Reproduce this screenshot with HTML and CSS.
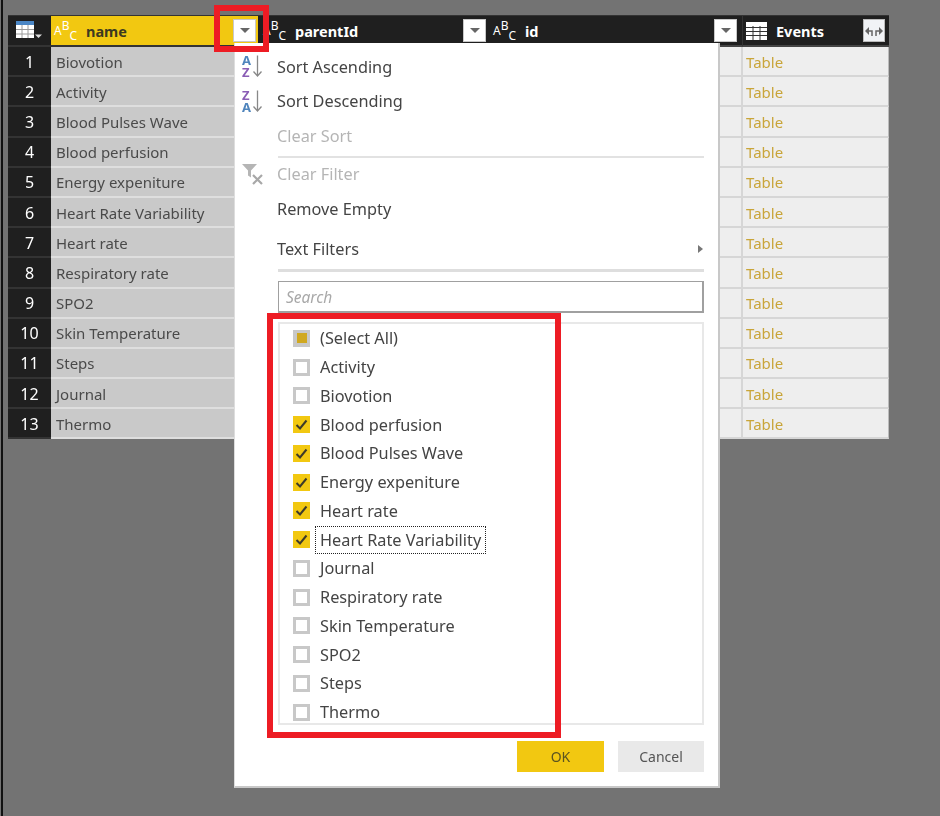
FILE: index.html
```html
<!DOCTYPE html>
<html lang="en">
<head>
<meta charset="utf-8">
<title>Power BI filter</title>
<link rel="stylesheet" href="styles.css">
</head>
<body>
<svg class="defs" width="0" height="0" aria-hidden="true">
  <symbol id="check" viewBox="0 0 17 17">
    <path d="M3.5 9l3.5 3.5 6.5-8" fill="none" stroke="#3d3a2a" stroke-width="2"/>
  </symbol>
</svg>
<div class="stage">
  <div class="table">
    <div class="hcell corner">
      <svg width="26" height="20" viewBox="0 0 26 20"><rect x="0" y="0" width="18" height="17" fill="#fff"/><rect x="0" y="0" width="18" height="4" fill="#4a86c5"/><path d="M6 4v13M12 4v13M0 8.500h18M0 13h18" stroke="#9a9a9a" stroke-width="1"/><path d="M19 13.500h7l-3.500 3.500z" fill="#ddd"/></svg>
    </div>
    <div class="hcell hname">
      <span class="abc"><span>A</span><span class="up">B</span><span class="down">C</span></span>
      <span class="hlabel dark">name</span>
      <span class="fbtn"><i class="tri"></i></span>
    </div>
    <div class="hcell hparent">
      <span class="abc"><span>A</span><span class="up">B</span><span class="down">C</span></span>
      <span class="hlabel">parentId</span>
      <span class="fbtn"><i class="tri"></i></span>
    </div>
    <div class="hcell hid">
      <span class="abc"><span>A</span><span class="up">B</span><span class="down">C</span></span>
      <span class="hlabel">id</span>
      <span class="fbtn"><i class="tri"></i></span>
    </div>
    <div class="hcell hevents">
      <svg class="tblicon" width="21" height="18" viewBox="0 0 21 18"><rect x="0.500" y="0.500" width="20" height="17" fill="#fff" stroke="#fff"/><path d="M0 5.500h21M0 9.500h21M0 13.500h21M7 4v14M14 4v14" stroke="#333" stroke-width="1"/></svg>
      <span class="hlabel">Events</span>
      <span class="xbtn"><svg width="20" height="16" viewBox="0 0 20 16"><path d="M1 8l4-4v8zM19 8l-4-4v8z" fill="#666"/><path d="M5 8h3v5M15 8h-3v5" fill="none" stroke="#666" stroke-width="1.500"/></svg></span>
    </div>

    <div class="num">1</div><div class="c name">Biovotion</div><div class="c"></div><div class="c"></div><div class="c tbl">Table</div>
    <div class="num">2</div><div class="c name">Activity</div><div class="c"></div><div class="c"></div><div class="c tbl">Table</div>
    <div class="num">3</div><div class="c name">Blood Pulses Wave</div><div class="c"></div><div class="c"></div><div class="c tbl">Table</div>
    <div class="num">4</div><div class="c name">Blood perfusion</div><div class="c"></div><div class="c"></div><div class="c tbl">Table</div>
    <div class="num">5</div><div class="c name">Energy expeniture</div><div class="c"></div><div class="c"></div><div class="c tbl">Table</div>
    <div class="num">6</div><div class="c name">Heart Rate Variability</div><div class="c"></div><div class="c"></div><div class="c tbl">Table</div>
    <div class="num">7</div><div class="c name">Heart rate</div><div class="c"></div><div class="c"></div><div class="c tbl">Table</div>
    <div class="num">8</div><div class="c name">Respiratory rate</div><div class="c"></div><div class="c"></div><div class="c tbl">Table</div>
    <div class="num">9</div><div class="c name">SPO2</div><div class="c"></div><div class="c"></div><div class="c tbl">Table</div>
    <div class="num">10</div><div class="c name">Skin Temperature</div><div class="c"></div><div class="c"></div><div class="c tbl">Table</div>
    <div class="num">11</div><div class="c name">Steps</div><div class="c"></div><div class="c"></div><div class="c tbl">Table</div>
    <div class="num">12</div><div class="c name">Journal</div><div class="c"></div><div class="c"></div><div class="c tbl">Table</div>
    <div class="num">13</div><div class="c name">Thermo</div><div class="c"></div><div class="c"></div><div class="c tbl">Table</div>
  </div>

  <div class="popup">
    <div class="item i1">
      <span class="mi"><svg width="24" height="31" viewBox="0 -3.500 24 31"><text x="1" y="10.500" class="sa">A</text><text x="1" y="22" class="sz">Z</text><path d="M16.500 1v20M12.500 17l4 4.500 4-4.500" fill="none" stroke="#888" stroke-width="1.300"/></svg></span>
      <span>Sort Ascending</span>
    </div>
    <div class="item i1">
      <span class="mi"><svg width="24" height="31" viewBox="0 -3.500 24 31"><text x="1" y="10.500" class="sz">Z</text><text x="1" y="22" class="sa">A</text><path d="M16.500 1v20M12.500 17l4 4.500 4-4.500" fill="none" stroke="#888" stroke-width="1.300"/></svg></span>
      <span>Sort Descending</span>
    </div>
    <div class="item i1 off"><span class="mi"></span><span>Clear Sort</span></div>
    <div class="sep"></div>
    <div class="item i2 off">
      <span class="mi"><svg width="24" height="22" viewBox="0 0 24 22"><path d="M1 1h15l-6 6.500v7l-3-2v-5z" fill="#b5b5b5"/><path d="M12 12l9 9M21 12l-9 9" stroke="#a8a8a8" stroke-width="2.200"/></svg></span>
      <span>Clear Filter</span>
    </div>
    <div class="item i3"><span class="mi"></span><span>Remove Empty</span></div>
    <div class="item i4"><span class="mi"></span><span class="grow">Text Filters</span><i class="sub"></i></div>
    <div class="sep thick"></div>
    <div class="search">Search</div>
    <div class="list">
      <div class="row"><span class="cb mixed"><i></i></span><span>(Select All)</span></div>
      <div class="row"><span class="cb"></span><span>Activity</span></div>
      <div class="row"><span class="cb"></span><span>Biovotion</span></div>
      <div class="row"><span class="cb on"><svg width="17" height="17"><use href="#check"/></svg></span><span>Blood perfusion</span></div>
      <div class="row"><span class="cb on"><svg width="17" height="17"><use href="#check"/></svg></span><span>Blood Pulses Wave</span></div>
      <div class="row"><span class="cb on"><svg width="17" height="17"><use href="#check"/></svg></span><span>Energy expeniture</span></div>
      <div class="row"><span class="cb on"><svg width="17" height="17"><use href="#check"/></svg></span><span>Heart rate</span></div>
      <div class="row"><span class="cb on"><svg width="17" height="17"><use href="#check"/></svg></span><span class="focus">Heart Rate Variability</span></div>
      <div class="row"><span class="cb"></span><span>Journal</span></div>
      <div class="row"><span class="cb"></span><span>Respiratory rate</span></div>
      <div class="row"><span class="cb"></span><span>Skin Temperature</span></div>
      <div class="row"><span class="cb"></span><span>SPO2</span></div>
      <div class="row"><span class="cb"></span><span>Steps</span></div>
      <div class="row"><span class="cb"></span><span>Thermo</span></div>
    </div>
    <div class="actions">
      <span class="btn ok">OK</span>
      <span class="btn cancel">Cancel</span>
    </div>
  </div>

  <div class="mark mark-btn"></div>
  <div class="mark mark-list"></div>
</div>
</body>
</html>
```

FILE: styles.css
```css
* { box-sizing: border-box; }
html, body { margin: 0; height: 100%; }
body {
  background: #737373;
  font-family: "Noto Sans", "Open Sans", sans-serif;
  overflow: hidden;
}
.defs { position: absolute; }
.stage {
  position: relative;
  width: 939px;
  height: 816px;
  margin-left: 1px;
  border-left: 2px solid #111;
  padding: 15px 0 0 5px;
  filter: blur(0.3px);
}
.table {
  width: 881px;
  display: grid;
  grid-template-columns: 43px 207px 230px 254px 147px;
  grid-template-rows: 32px repeat(13, 30.2px);
}
.hcell {
  background: #1f1f1f;
  display: flex;
  align-items: center;
  color: #fff;
  border-top: 1px solid #333;
}
.corner { padding-left: 8px; border-bottom: 2px solid #333; padding-top: 1px; }
.hname { background: #f2c811; padding: 0 2px 0 3px; border-bottom: 2px solid #333; }
.hparent, .hid, .hevents { padding: 0 2px 0 5px; border-bottom: 2px solid #444; }
.hid { padding-right: 5px; }
.hevents { padding: 0 4px 0 3px; border-left: 1px solid #333; }
.abc {
  flex: none;
  width: 24px;
  height: 24px;
  display: flex;
  align-items: center;
  font-size: 12px;
  line-height: 14px;
  color: #fff;
}
.abc .up { align-self: flex-start; }
.abc .down { align-self: flex-end; }
.hlabel {
  flex: 1;
  margin-left: 8px;
  font-size: 14.5px;
  font-weight: 700;
  color: #fff;
}
.hevents .hlabel { margin-left: 9px; }
.hlabel.dark { color: #3d3a20; }
.fbtn {
  flex: none;
  width: 23px;
  height: 23px;
  background: #fff;
  border: 1px solid #c8c8c8;
  display: flex;
  align-items: center;
  justify-content: center;
}
.tri {
  width: 0;
  height: 0;
  border-left: 5px solid transparent;
  border-right: 5px solid transparent;
  border-top: 5px solid #666;
}
.xbtn {
  flex: none;
  width: 22px;
  height: 23px;
  background: #f1f3f6;
  border: 1px solid #bbb;
  display: flex;
  align-items: center;
  justify-content: center;
}
.num {
  background: #1f1f1f;
  color: #fff;
  font-size: 16px;
  display: flex;
  align-items: center;
  justify-content: center;
  padding-top: 1px;
  border-bottom: 2px solid #333;
}
.c {
  background: #eeeeee;
  border-bottom: 2px solid #d6d6d6;
  border-right: 1px solid #d6d6d6;
  display: flex;
  align-items: center;
  padding: 1px 0 0 4px;
  font-size: 15px;
  color: #555;
  white-space: nowrap;
}
.c.name { background: #c9c9c9; border-bottom-color: #dedede; border-right: 0; padding-left: 5px; color: #4a4a4a; }
.c.tbl { color: #c9a53a; padding-left: 3px; border-right: 1px solid #bbb; border-left: 1px solid #d6d6d6; }

.popup {
  position: absolute;
  left: 231px;
  top: 43px;
  width: 486px;
  height: 745px;
  background: #fff;
  border-right: 2px solid #c8c8c8;
  border-bottom: 2px solid #c8c8c8;
  border-left: 1px solid #ddd;
  padding-top: 6.5px;
  color: #444;
  font-size: 16.3px;
}
.item { display: flex; align-items: center; padding-left: 6px; white-space: nowrap; }
.i1 { height: 34.5px; }
.i2 { height: 32px; }
.i3 { height: 38px; }
.i4 { height: 41px; }
.off { color: #b5b5b5; }
.mi { flex: none; width: 36px; height: 24px; display: flex; align-items: center; }
.grow { flex: 1; }
.sub {
  width: 0;
  height: 0;
  margin-right: 15px;
  border-top: 4px solid transparent;
  border-bottom: 4px solid transparent;
  border-left: 5px solid #777;
}
.sa { font: 700 13px "Noto Sans", sans-serif; fill: #4f85bd; }
.sz { font: 700 13px "Noto Sans", sans-serif; fill: #8a5db5; }
.sep { height: 2px; margin: 3px 14px 0 43px; background: #e2e2e2; }
.thick { height: 3px; margin-top: 0; background: #dedede; }
.search {
  height: 32px;
  margin: 9px 14px 0 43px;
  border: 2px solid #a0a0a0;
  border-width: 1px 2px 2px 1px;
  padding-left: 7px;
  font-style: italic;
  font-size: 15.5px;
  line-height: 31px;
  color: #a8a8a8;
}
.list {
  height: 403px;
  margin: 9px 14px 0 43px;
  border: 2px solid #e8e8e8;
  padding: 0 0 0 13px;
}
.row { height: 28.75px; display: flex; align-items: center; gap: 10px; white-space: nowrap; }
.cb {
  flex: none;
  width: 17px;
  height: 17px;
  border: 3px solid #c8c8c8;
  background: #fff;
  display: flex;
  align-items: center;
  justify-content: center;
}
.cb.mixed { background: #c8c8c8; border: 0; }
.cb.mixed i { display: block; width: 10px; height: 10px; background: #d0a820; }
.cb.on { background: #f2c811; border: 0; }
.focus { outline: 1px dotted #222; padding: 2px 4px; margin: 0 -4px; }
.actions { display: flex; justify-content: flex-end; gap: 14px; margin: 16px 14px 0 0; }
.btn {
  width: 86px;
  height: 31px;
  display: flex;
  align-items: center;
  justify-content: center;
  font-size: 14px;
}
.ok { background: #f2c811; color: #5a5420; width: 87px; }
.cancel { background: #e9e9e9; color: #555; }

.mark { position: absolute; border: 6px solid #ed1c24; pointer-events: none; }
.mark-btn { left: 211px; top: 5px; width: 55px; height: 47px; }
.mark-list { left: 264px; top: 313px; width: 294px; height: 425px; }
```
